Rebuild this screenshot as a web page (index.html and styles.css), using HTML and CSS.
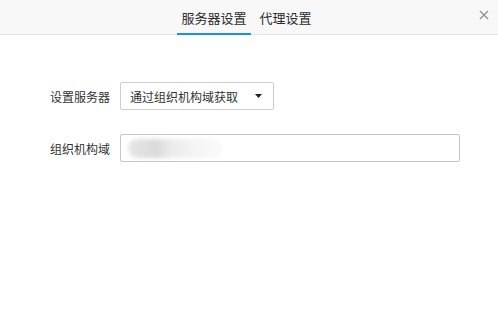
FILE: index.html
```html
<!DOCTYPE html>
<html>
<head>
	<meta charset="utf-8">
	<title>服务器设置</title>
	<link rel="stylesheet" href="styles.css">
</head>
<body>
	<div class="dialog">
		<div class="tabs">
			<div class="tab active">服务器设置</div>
			<div class="tab">代理设置</div>
			<span class="close">
				<svg width="10" height="10" viewBox="0 0 10 10">
					<path d="M1 1L9 9M9 1L1 9" stroke="#8c9098" stroke-width="1.3" fill="none"/>
				</svg>
			</span>
		</div>
		<div class="form">
			<div class="row">
				<span class="label">设置服务器</span>
				<div class="select">
					<span>通过组织机构域获取</span>
					<svg class="arrow" width="7" height="4" viewBox="0 0 7 4">
						<path d="M0 0H7L3.5 4Z" fill="#222"/>
					</svg>
				</div>
			</div>
			<div class="row">
				<span class="label">组织机构域</span>
				<div class="input">
					<span class="blur"></span>
				</div>
			</div>
		</div>
	</div>
</body>
</html>
```

FILE: styles.css
```css
body {
	margin: 0;
	font-family: "Noto Sans CJK SC", "Noto Sans", sans-serif;
	color: #333;
	background: #fff;
}
.dialog {
	width: 498px;
	height: 316px;
}
.tabs {
	position: relative;
	display: flex;
	justify-content: center;
	gap: 5px;
	height: 34px;
	padding-right: 5px;
	background: #f8f8f8;
	border-bottom: 1px solid #e6e6e6;
}
.tab {
	box-sizing: border-box;
	height: 35px;
	margin-bottom: -1px;
	padding: 9px 4px 0;
	font-size: 13px;
	line-height: 18px;
	color: #2b2b2b;
	border-bottom: 2px solid transparent;
}
.tab.active {
	border-bottom-color: #1a8cff;
}
.close {
	position: absolute;
	top: 1px;
	right: 9px;
	width: 10px;
	height: 10px;
}
.form {
	display: flex;
	flex-direction: column;
	gap: 24px;
	padding: 47px 0 0 50px;
}
.row {
	display: flex;
	align-items: center;
}
.label {
	width: 60px;
	margin-right: 10px;
	font-size: 12px;
	line-height: 18px;
	padding-top: 2px;
}
.select {
	box-sizing: border-box;
	display: flex;
	align-items: center;
	justify-content: space-between;
	width: 154px;
	height: 28px;
	padding: 0 11px 0 9px;
	font-size: 12px;
	border: 1px solid #cfcfcf;
	border-radius: 2px;
	background: #fff;
}
.select span {
	padding-top: 1px;
}
.input {
	box-sizing: border-box;
	display: flex;
	align-items: center;
	width: 340px;
	height: 28px;
	padding-left: 7px;
	border: 1px solid #c6c6c6;
	border-radius: 2px;
	overflow: hidden;
}
.blur {
	display: block;
	width: 96px;
	height: 19px;
	border-radius: 10px;
	background: linear-gradient(90deg, #e6e6e6 0, #dadada 30%, #ececec 45%, #f4f4f4 70%, #fcfcfc 100%);
	filter: blur(2px);
}
```
